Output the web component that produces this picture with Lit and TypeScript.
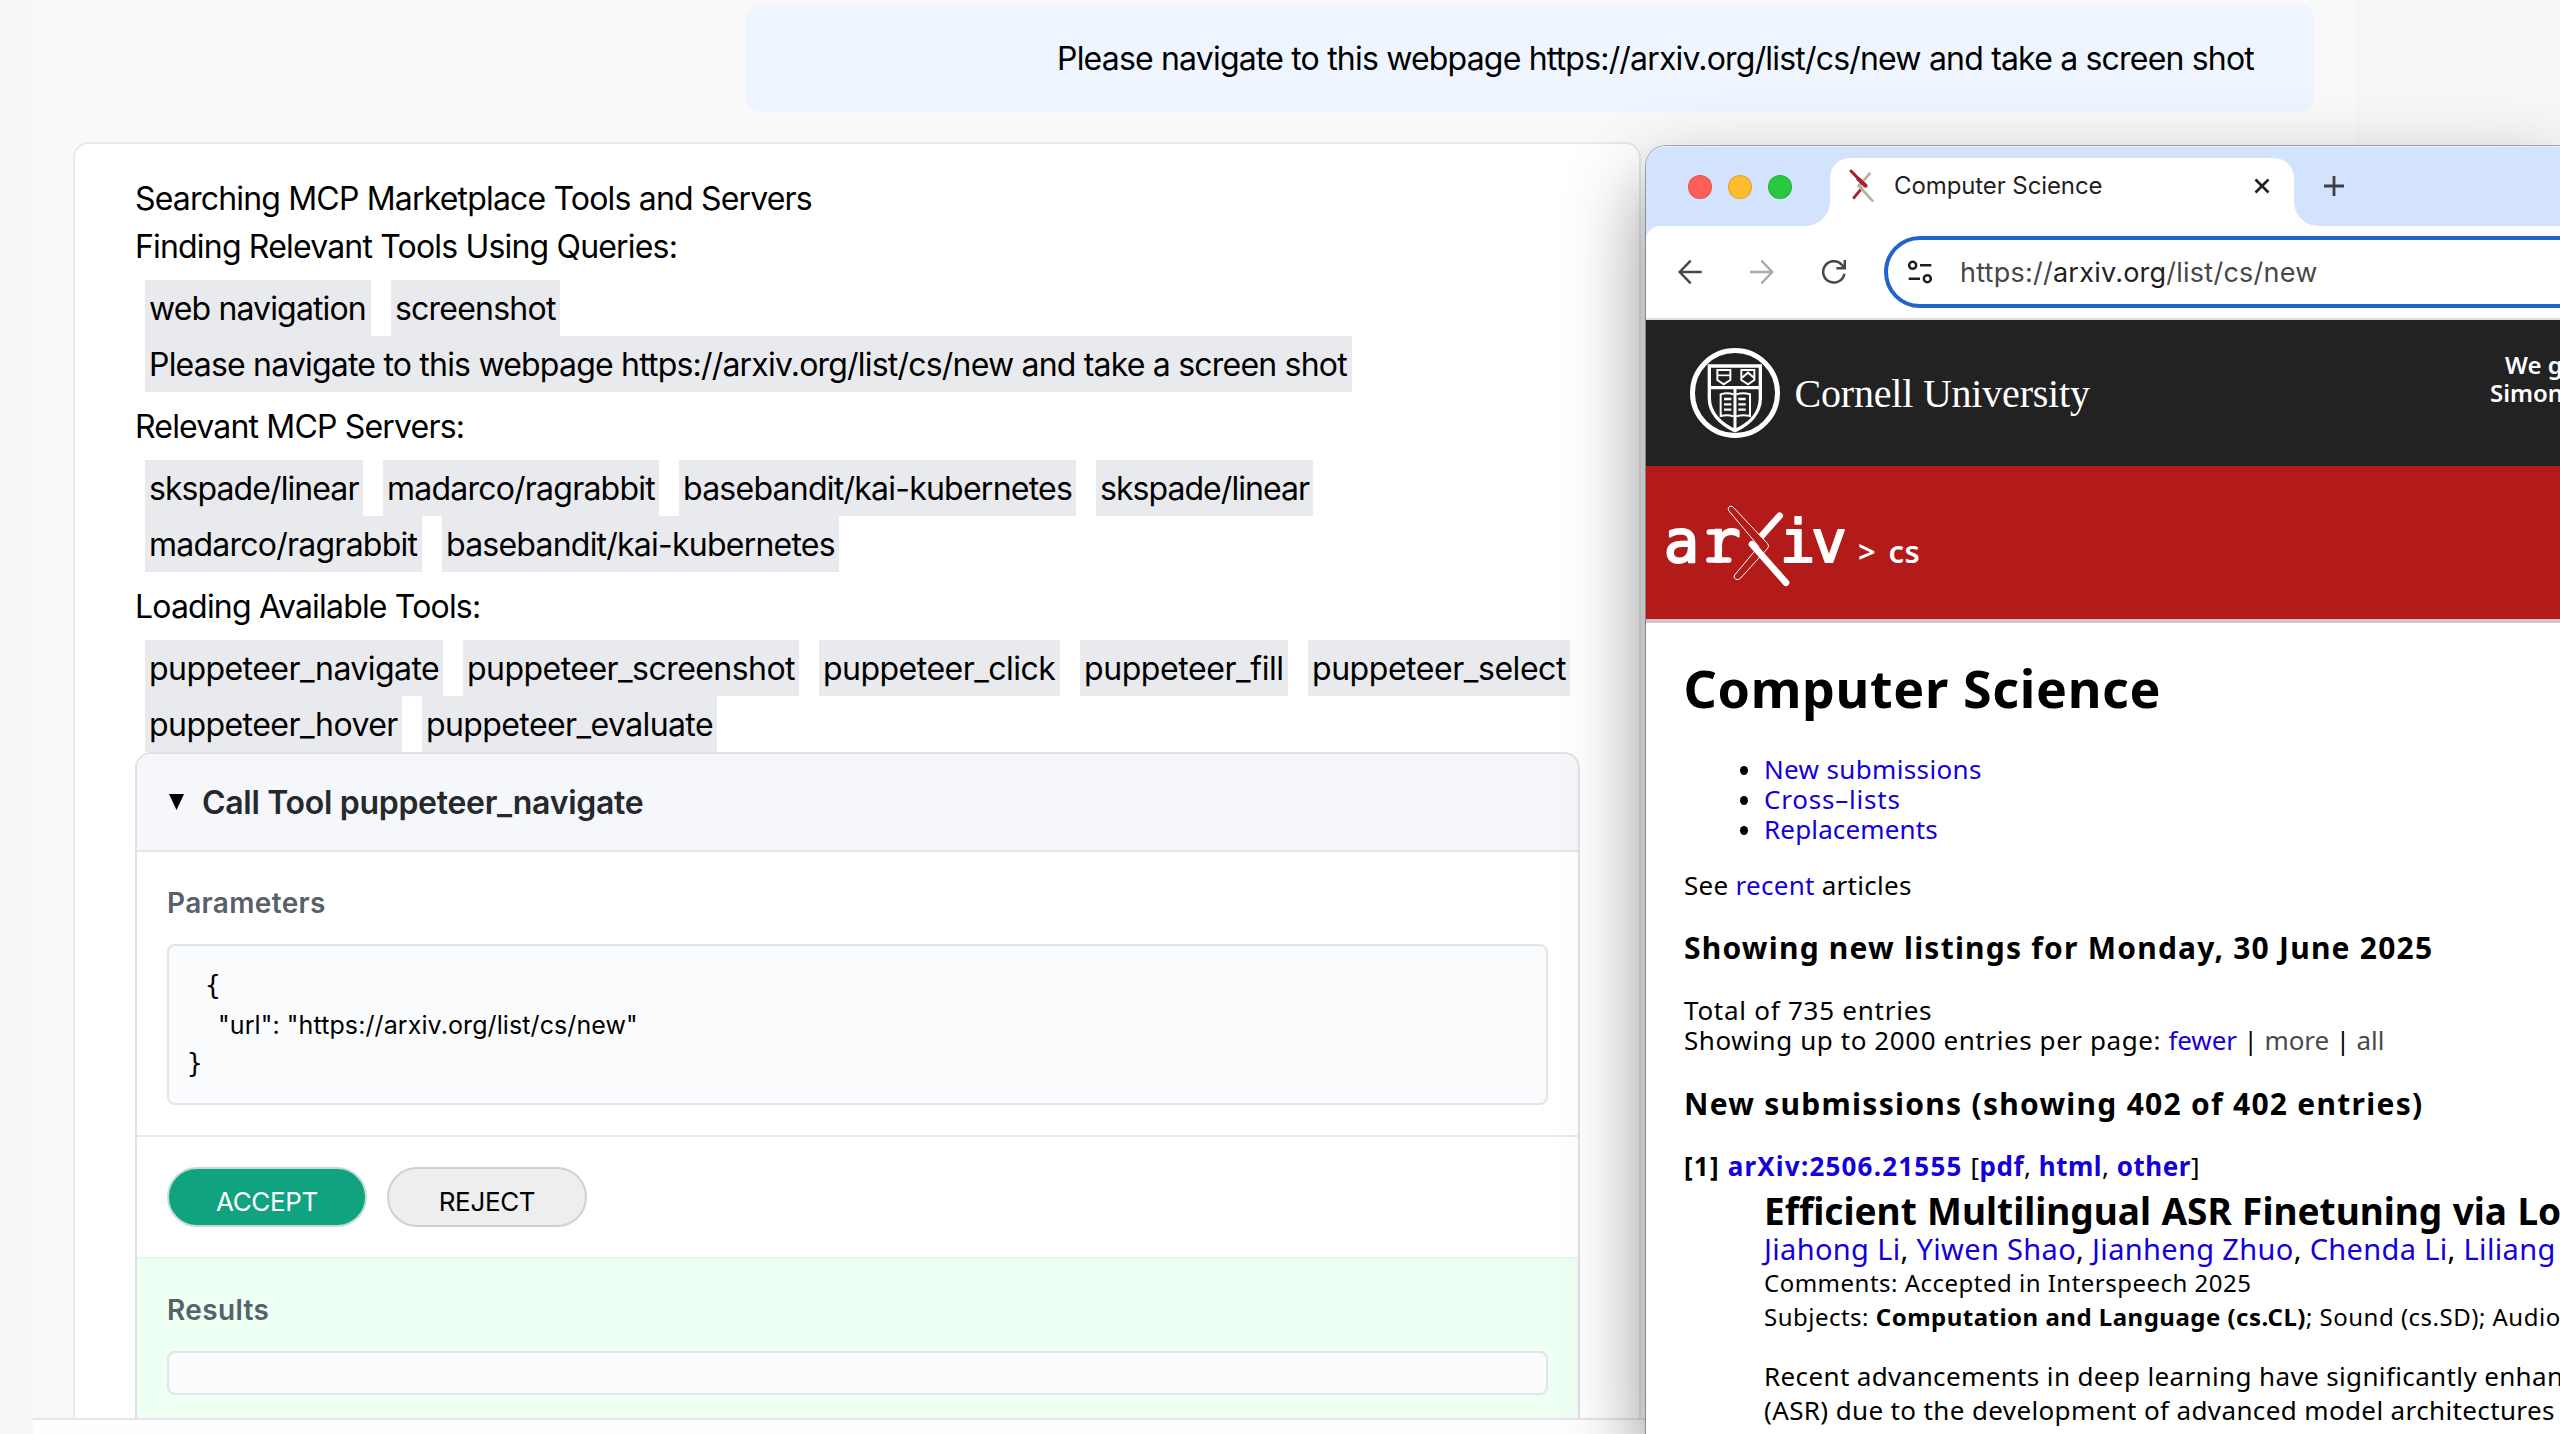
import { LitElement, html, css, svg } from "lit";
import { customElement } from "lit/decorators.js";
import { styleMap } from "lit/directives/style-map.js";

/** A highlighted tag: label, box width and tracking, both in pixels. */
interface Tag {
  label: string;
  width: number;
  tracking: number;
}
const tag = (label: string, width: number, tracking: number): Tag => ({ label, width, tracking });

const QUERIES: Tag[][] = [
  [tag("web navigation", 226, -0.86), tag("screenshot", 169, -0.78)],
  [tag("Please navigate to this webpage https://arxiv.org/list/cs/new and take a screen shot", 1207, -0.8)],
];
const SERVERS: Tag[][] = [
  [
    tag("skspade/linear", 218, -0.92),
    tag("madarco/ragrabbit", 276, -0.78),
    tag("basebandit/kai-kubernetes", 397, -0.76),
    tag("skspade/linear", 217, -0.95),
  ],
  [tag("madarco/ragrabbit", 277, -0.76), tag("basebandit/kai-kubernetes", 397, -0.77)],
];
const TOOLS: Tag[][] = [
  [
    tag("puppeteer_navigate", 298, -0.55),
    tag("puppeteer_screenshot", 336, -0.54),
    tag("puppeteer_click", 241, -0.52),
    tag("puppeteer_fill", 208, -0.42),
    tag("puppeteer_select", 262, -0.45),
  ],
  [tag("puppeteer_hover", 257, -0.55), tag("puppeteer_evaluate", 295, -0.6)],
];

@customElement("chat-pane")
export class ChatPane extends LitElement {
  static styles = css`
    :host {
      display: block;
      font-family: Inter, "Liberation Sans", sans-serif;
      font-size: 32px;
      color: #000;
      white-space: nowrap;
    }
    .column {
      margin-left: 33px;
      width: 2322px;
      height: 1418px;
      box-sizing: border-box;
      padding-top: 4px;
      background: #f9f9f9;
      overflow: hidden;
    }
    .bubble {
      margin-left: 713px;
      width: 1569px;
      height: 108px;
      line-height: 108px;
      box-sizing: border-box;
      padding: 1px 61px 0 0;
      text-align: right;
      letter-spacing: -0.81px;
      background: #eef5ff;
      border-radius: 16px;
    }
    .card {
      margin: 30px 0 0 40px;
      width: 1568px;
      height: 1290px;
      box-sizing: border-box;
      padding: 32px 60px 0;
      background: #fff;
      border: 2px solid #e7e8ec;
      border-radius: 16px;
    }
    .line {
      line-height: 46px;
      padding-bottom: 2px;
      letter-spacing: -0.82px;
    }
    .group {
      margin: 8px 0 12px 10px;
    }
    .group.last {
      margin-bottom: 0;
    }
    .row {
      display: flex;
      gap: 20px;
    }
    .tag {
      height: 56px;
      line-height: 56px;
      box-sizing: border-box;
      padding: 1px 0 0 4px;
      background: #e9eaed;
    }
    .tool {
      width: 1445px;
      box-sizing: border-box;
      border: 2px solid #dfe1e5;
      border-radius: 16px 16px 0 0;
      overflow: hidden;
    }
    .head {
      display: flex;
      align-items: center;
      gap: 18.5px;
      height: 96px;
      padding-left: 31.5px;
      background: #f6f7fa;
      border-bottom: 2px solid #e3e5e9;
      color: #24292e;
      font-weight: 600;
      letter-spacing: -0.3px;
    }
    .head svg {
      width: 15px;
      height: 16px;
    }
    .section {
      padding: 30px;
      border-bottom: 2px solid #e9eaec;
    }
    .section.results {
      background: #eefff4;
    }
    .section.actions {
      display: flex;
      gap: 20px;
      border-bottom-color: #e3faea;
    }
    .label {
      padding-top: 1px;
      line-height: 41px;
      margin-bottom: 20px;
      font-size: 28px;
      font-weight: 600;
      letter-spacing: 0.35px;
      color: #586069;
    }
    .box {
      box-sizing: border-box;
      width: 1381px;
      background: #fafbfd;
      border: 2px solid #e1e4e8;
      border-radius: 8px;
    }
    .params {
      height: 161px;
      padding: 20px 18px;
      font-size: 25px;
      line-height: 39px;
    }
    .empty {
      height: 44px;
    }
    .brace {
      font-family: "DejaVu Sans Mono", monospace;
      font-size: 26px;
      height: 39px;
    }
    .brace.open {
      padding-left: 18px;
    }
    .pair {
      height: 38px;
      padding: 1px 0 0 31px;
      letter-spacing: 0.1px;
    }
    .button {
      width: 200px;
      height: 60px;
      box-sizing: border-box;
      padding-top: 9px;
      line-height: 48px;
      font-size: 26px;
      letter-spacing: -0.35px;
      text-align: center;
      border: 2px solid #d0d0d0;
      border-radius: 30px;
      background: #eee;
    }
    .button.accept {
      background: #11a37f;
      border-color: #c3dcd5;
      color: #fff;
    }
    .footer {
      margin-left: 33px;
      height: 16px;
      box-sizing: border-box;
      border-top: 2px solid #e5e6e8;
      background: #fefefe;
    }
  `;

  private tags(rows: Tag[][]) {
    return rows.map(
      (row) => html`<div class="row">
        ${row.map(
          (t) =>
            html`<span class="tag" style=${styleMap({ width: `${t.width}px`, letterSpacing: `${t.tracking}px` })}>${t.label}</span>`
        )}
      </div>`
    );
  }

  render() {
    return html`
      <div class="column">
        <div class="bubble">Please navigate to this webpage https://arxiv.org/list/cs/new and take a screen shot</div>
        <div class="card">
          <div class="line">Searching MCP Marketplace Tools and Servers</div>
          <div class="line">Finding Relevant Tools Using Queries:</div>
          <div class="group">${this.tags(QUERIES)}</div>
          <div class="line">Relevant MCP Servers:</div>
          <div class="group">${this.tags(SERVERS)}</div>
          <div class="line">Loading Available Tools:</div>
          <div class="group last">${this.tags(TOOLS)}</div>
          <div class="tool">
            <div class="head">
              <svg viewBox="0 0 15 16"><path d="M0 0H15L7.5 16Z" fill="#000" /></svg>
              <span>Call Tool puppeteer_navigate</span>
            </div>
            <div class="section">
              <div class="label">Parameters</div>
              <div class="box params">
                <div class="brace open">{</div>
                <div class="pair">"url": "https://arxiv.org/list/cs/new"</div>
                <div class="brace">}</div>
              </div>
            </div>
            <div class="section actions">
              <div class="button accept">ACCEPT</div>
              <div class="button">REJECT</div>
            </div>
            <div class="section results">
              <div class="label">Results</div>
              <div class="box empty"></div>
            </div>
          </div>
        </div>
      </div>
      <div class="footer"></div>
    `;
  }
}

const favicon = svg`
  <path d="M690 102L660 136" stroke="#b8b0a8" stroke-width="8" stroke-linecap="round" />
  <path d="M658 139L698 183" stroke="#b8b0a8" stroke-width="8" stroke-linecap="round" />
  <path d="M634 94L676 137" stroke="#aa2128" stroke-width="9" stroke-linecap="round" />
  <path d="M661 152L643 174" stroke="#aa2128" stroke-width="9" stroke-linecap="round" />
  <path d="M652 138L660 130L672 146L664 152Z" fill="#b8b0a8" />
  <path d="M656 118L678 138" stroke="#aa2128" stroke-width="12" stroke-linecap="round" />`;

const seal = svg`
  <g fill="none" stroke="#fff">
    <circle cx="266" cy="174" r="127.5" stroke-width="15" />
    <path d="M189 93H342V190C342 232 312 266 266 287C220 266 189 232 189 190Z" stroke-width="10" />
    <path d="M190 158H342" stroke-width="10" />
    <path d="M213 105H252V135L232 148L213 135Z" stroke-width="6" />
    <path d="M214 121H251" stroke-width="5" />
    <path d="M285 105H324V135L305 148L285 135Z" stroke-width="6" />
    <path d="M287 128L305 113L323 128" stroke-width="6" />
    <path d="M266 158V287" stroke-width="9" />
    <path d="M262 178Q242 172 223 178V243Q244 238 262 244M270 178Q290 172 311 178V243Q290 238 270 244" stroke-width="6" />
    <path d="M233 192H255M233 208H255M233 224H255M276 192H298M276 208H298M276 224H298" stroke-width="7" />
  </g>`;

const arxivMark = svg`
  <g fill="#fff" stroke="#fff" stroke-width="6" stroke-linejoin="round" font-family="DejaVu Sans Mono" font-size="177">
    <text x="53" y="681">a</text>
    <text x="178" y="681">r</text>
    <text x="401" y="681">i</text>
    <text x="496" y="681">v</text>
  </g>
  <path d="M189 675H248M190 591H212" stroke="#fff" stroke-width="17" stroke-linecap="round" />
  <path d="M401 542L346 604" stroke="#fff" stroke-width="20" stroke-linecap="round" />
  <path d="M249 528Q243 517 252 514Q259 512 264 519L364 625Q371 632 365 640L284 729Q277 737 269 733Q261 728 266 720L338 634Z"
    fill="#b31b1b" stroke="#fff" stroke-width="3" stroke-linejoin="round" />
  <path d="M318 628L420 743" stroke="#fff" stroke-width="20" stroke-linecap="round" />`;

@customElement("browser-window")
export class BrowserWindow extends LitElement {
  static styles = css`
    :host {
      display: block;
      box-sizing: border-box;
      border-radius: 20px 0 0 0;
      overflow: hidden;
      background: #fff;
      white-space: nowrap;
      font-family: "Noto Sans", sans-serif;
      color: #000;
    }
    .strip {
      display: flex;
      align-items: center;
      height: 80px;
      padding-left: 42px;
      background: #d3e2fd;
      box-sizing: border-box;
      box-shadow: inset 0 1px 0 #e6effe;
    }
    .lights {
      display: flex;
      gap: 16px;
      padding-top: 2px;
    }
    .light {
      width: 24px;
      height: 24px;
      box-sizing: border-box;
      border-radius: 50%;
      border: 1px solid rgba(0, 0, 0, 0.12);
    }
    .light.close {
      background: #ff5f57;
    }
    .light.min {
      background: #febc2e;
    }
    .light.max {
      background: #28c840;
    }
    .tab {
      position: relative;
      align-self: flex-end;
      display: flex;
      align-items: center;
      width: 464px;
      height: 68px;
      margin-left: 38px;
      box-sizing: border-box;
      padding: 0 24px 13px 18px;
      background: #fff;
      border-radius: 20px 20px 0 0;
      font: 24px Inter, sans-serif;
      letter-spacing: -0.1px;
      color: #1f1f1f;
    }
    .tab::before,
    .tab::after {
      content: "";
      position: absolute;
      bottom: 0;
      width: 24px;
      height: 24px;
    }
    .tab::before {
      left: -24px;
      background: radial-gradient(circle at 0 0, transparent 23.5px, #fff 24px);
    }
    .tab::after {
      right: -24px;
      background: radial-gradient(circle at 100% 0, transparent 23.5px, #fff 24px);
    }
    .favicon {
      width: 27px;
      height: 33px;
      margin-right: 19px;
    }
    .tabtitle {
      flex: 1;
    }
    .x {
      width: 16px;
      height: 16px;
    }
    .plus {
      width: 20px;
      height: 20px;
      margin-left: 30px;
    }
    .under {
      background: #d3e2fd;
    }
    .toolbar {
      display: flex;
      align-items: center;
      height: 94px;
      box-sizing: border-box;
      padding-left: 32px;
      background: #fff;
      border-radius: 14px 0 0 0;
      border-bottom: 2px solid #dedede;
    }
    .nav {
      width: 24px;
      height: 24px;
      margin-right: 48px;
    }
    .nav.reload {
      margin-right: 38px;
    }
    .address {
      flex: 1;
      display: flex;
      align-items: center;
      height: 72px;
      box-sizing: border-box;
      padding-left: 20px;
      margin-right: -60px;
      border: 4px solid #1f66cc;
      border-radius: 36px;
      font: 27px Inter, sans-serif;
      letter-spacing: 0.24px;
      color: #474747;
    }
    .address svg {
      width: 24px;
      height: 24px;
      margin-right: 28px;
    }
    .host {
      color: #1f1f1f;
    }
    .cornell {
      display: flex;
      align-items: center;
      height: 146px;
      padding-left: 43.5px;
      background: #222;
      color: #fff;
    }
    .seal {
      width: 90px;
      height: 90px;
    }
    .uni {
      margin-left: 15px;
      font: 40px "Liberation Serif", serif;
      letter-spacing: -0.2px;
    }
    .support {
      align-self: flex-start;
      margin-left: auto;
      padding-top: 31px;
      width: 70px;
      overflow: hidden;
      font-size: 24px;
      font-weight: 600;
      line-height: 28px;
      letter-spacing: 0;
    }
    .support div:first-child {
      padding-left: 15px;
    }
    .arxiv {
      display: flex;
      align-items: center;
      height: 153px;
      padding-left: 14px;
      background: #b31b1b;
      border-bottom: 4px solid #cdc6c6;
      color: #fff;
    }
    .mark {
      width: 190px;
      height: 90px;
      margin-top: 5px;
    }
    .crumb {
      margin: 16px 0 0 8px;
      font-size: 31px;
      font-weight: 600;
      letter-spacing: 0.4px;
      word-spacing: 4px;
    }
    .content {
      padding: 35px 0 0 38px;
      font-size: 26px;
      line-height: 30px;
      letter-spacing: 0.28px;
    }
    h1,
    h3,
    ul,
    p {
      margin: 0;
      padding: 0;
    }
    h1 {
      margin-left: -0.5px;
      font-size: 52px;
      line-height: 60px;
      letter-spacing: 0.65px;
    }
    ul {
      margin-top: 36.2px;
      list-style: none;
    }
    li {
      display: flex;
      align-items: center;
    }
    li::before {
      content: "";
      width: 8px;
      height: 9px;
      margin: 3px 16px 0 56px;
      border-radius: 50%;
      background: #000;
    }
    li.a {
      letter-spacing: 0.35px;
    }
    li.b {
      letter-spacing: 0.8px;
    }
    li.c {
      letter-spacing: 0.15px;
    }
    .link {
      color: #1400dc;
    }
    .see {
      margin-top: 26px;
    }
    h3 {
      font-size: 30px;
      line-height: 36px;
      letter-spacing: 1.22px;
    }
    .day {
      margin-top: 30px;
    }
    .total {
      margin-top: 28.5px;
      letter-spacing: 0.75px;
    }
    .paging {
      letter-spacing: 0.58px;
    }
    .paging .choices {
      letter-spacing: -0.1px;
    }
    .gray {
      color: #4a4a4a;
    }
    .newsub {
      margin-top: 31px;
      letter-spacing: 1.27px;
    }
    .entry {
      margin-top: 29px;
      letter-spacing: 1.2px;
    }
    .entry b {
      font-weight: 700;
    }
    .formats {
      letter-spacing: 0.5px;
    }
    .paper {
      margin-left: 80px;
    }
    .title {
      margin: 8.7px 0 0 0;
      font-size: 37px;
      line-height: 44px;
      font-weight: 700;
      letter-spacing: 0;
      word-spacing: 0.8px;
    }
    .authors {
      margin-top: 0.5px;
      font-size: 29px;
      letter-spacing: 0.34px;
    }
    .meta {
      font-size: 24px;
      line-height: 34.2px;
      letter-spacing: 0.49px;
    }
    .meta.first {
      margin-top: 2.2px;
    }
    .abstract {
      margin-top: 25.5px;
      line-height: 33.6px;
      letter-spacing: 0.37px;
    }
  `;

  render() {
    return html`
      <div class="strip">
        <div class="lights">
          <span class="light close"></span><span class="light min"></span><span class="light max"></span>
        </div>
        <div class="tab">
          <svg class="favicon" viewBox="625 88 81 99" fill="none">${favicon}</svg>
          <span class="tabtitle">Computer Science</span>
          <svg class="x" viewBox="0 0 16 16"><path d="M1.5 1.5L14.5 14.5M14.5 1.5L1.5 14.5" stroke="#1f1f1f" stroke-width="2.6" /></svg>
        </div>
        <svg class="plus" viewBox="0 0 20 20"><path d="M10 0V20M0 10H20" stroke="#3c4043" stroke-width="2.8" /></svg>
      </div>
      <div class="under">
        <div class="toolbar">
          <svg class="nav" viewBox="115 360 72 72" fill="none" stroke="#474747" stroke-width="7.500">
            <path d="M186 396H121M153 362L120 396L153 430" />
          </svg>
          <svg class="nav" viewBox="330 360 72 72" fill="none" stroke="#ababab" stroke-width="7.500">
            <path d="M330 396H396M364 362L397 396L364 430" />
          </svg>
          <svg class="nav reload" viewBox="546 360 72 72" fill="none" stroke="#474747" stroke-width="7.500">
            <path d="M613 401A32 32 0 1 1 606 375L614 386M614.500 360V385H589" />
          </svg>
          <div class="address">
            <svg viewBox="804 360 72 72" fill="none" stroke="#1f1f1f" stroke-width="7.500">
              <circle cx="818" cy="376" r="10.500" />
              <path d="M840 376H874M806 416H840" />
              <circle cx="862" cy="416" r="10.500" />
            </svg>
            <span>https://<span class="host">arxiv.org</span>/list/cs/new</span>
          </div>
        </div>
      </div>
      <div class="cornell">
        <svg class="seal" viewBox="131 39 270 270">${seal}</svg>
        <span class="uni">Cornell University</span>
        <div class="support">
          <div>We g</div>
          <div>Simon</div>
        </div>
      </div>
      <div class="arxiv">
        <svg class="mark" viewBox="42 495 570 270" fill="none">${arxivMark}</svg>
        <span class="crumb">&gt; cs</span>
      </div>
      <div class="content">
        <h1>Computer Science</h1>
        <ul>
          <li class="a"><span class="link">New submissions</span></li>
          <li class="b"><span class="link">Cross–lists</span></li>
          <li class="c"><span class="link">Replacements</span></li>
        </ul>
        <p class="see">See <span class="link">recent</span> articles</p>
        <h3 class="day">Showing new listings for Monday, 30 June 2025</h3>
        <p class="total">Total of 735 entries</p>
        <p class="paging">
          Showing up to 2000 entries per page:
          <span class="choices"><span class="link">fewer</span> | <span class="gray">more</span> | <span class="gray">all</span></span>
        </p>
        <h3 class="newsub">New submissions (showing 402 of 402 entries)</h3>
        <p class="entry">
          <b>[1]</b> <b class="link">arXiv:2506.21555</b>
          <span class="formats">[<b class="link">pdf</b>, <b class="link">html</b>, <b class="link">other</b>]</span>
        </p>
        <div class="paper">
          <div class="title">Efficient Multilingual ASR Finetuning via Lo</div>
          <div class="authors">
            <span class="link">Jiahong Li</span>, <span class="link">Yiwen Shao</span>, <span class="link">Jianheng Zhuo</span>,
            <span class="link">Chenda Li</span>, <span class="link">Liliang</span>
          </div>
          <div class="meta first">Comments: Accepted in Interspeech 2025</div>
          <div class="meta">Subjects: <b>Computation and Language (cs.CL)</b>; Sound (cs.SD); Audio</div>
          <div class="abstract">
            Recent advancements in deep learning have significantly enhan<br />
            (ASR) due to the development of advanced model architectures<br />
            However, multilingual data usually suffers from
          </div>
        </div>
      </div>
    `;
  }
}

@customElement("app-root")
export class AppRoot extends LitElement {
  static styles = css`
    :host {
      display: block;
      position: relative;
      width: 2560px;
      height: 1434px;
      overflow: hidden;
      background: #f7f7f9;
    }
    .window {
      position: absolute;
      left: 1646px;
      top: 146px;
      width: 914px;
      height: 1288px;
      box-shadow: 0 0 0 1px rgba(0, 0, 0, 0.3), 0 36px 80px rgba(0, 0, 0, 0.45);
    }
  `;

  render() {
    return html`<chat-pane></chat-pane><browser-window class="window"></browser-window>`;
  }
}
